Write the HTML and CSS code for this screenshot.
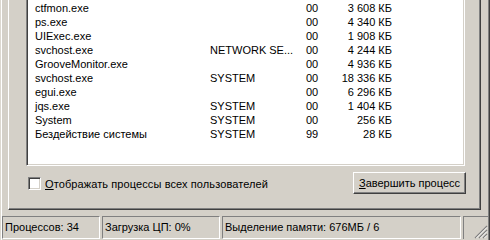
FILE: index.html
```html
<!DOCTYPE html>
<html lang="ru">
<head>
<meta charset="utf-8">
<title>Диспетчер задач</title>
<link rel="stylesheet" href="styles.css">
</head>
<body>
<div class="window">
  <div class="tabpane">
    <div class="list">
      <div class="row"><span class="c-name">ctfmon.exe</span><span class="c-user"></span><span class="c-cpu">00</span><span class="c-mem">3 608 КБ</span></div>
      <div class="row"><span class="c-name">ps.exe</span><span class="c-user"></span><span class="c-cpu">00</span><span class="c-mem">4 340 КБ</span></div>
      <div class="row"><span class="c-name">UIExec.exe</span><span class="c-user"></span><span class="c-cpu">00</span><span class="c-mem">1 908 КБ</span></div>
      <div class="row"><span class="c-name">svchost.exe</span><span class="c-user">NETWORK SE...</span><span class="c-cpu">00</span><span class="c-mem">4 244 КБ</span></div>
      <div class="row"><span class="c-name">GrooveMonitor.exe</span><span class="c-user"></span><span class="c-cpu">00</span><span class="c-mem">4 936 КБ</span></div>
      <div class="row"><span class="c-name">svchost.exe</span><span class="c-user">SYSTEM</span><span class="c-cpu">00</span><span class="c-mem">18 336 КБ</span></div>
      <div class="row"><span class="c-name">egui.exe</span><span class="c-user"></span><span class="c-cpu">00</span><span class="c-mem">6 296 КБ</span></div>
      <div class="row"><span class="c-name">jqs.exe</span><span class="c-user">SYSTEM</span><span class="c-cpu">00</span><span class="c-mem">1 404 КБ</span></div>
      <div class="row"><span class="c-name">System</span><span class="c-user">SYSTEM</span><span class="c-cpu">00</span><span class="c-mem">256 КБ</span></div>
      <div class="row"><span class="c-name">Бездействие системы</span><span class="c-user">SYSTEM</span><span class="c-cpu">99</span><span class="c-mem">28 КБ</span></div>
    </div>
    <div class="options">
      <label class="check"><span class="box"></span><span><u>О</u>тображать процессы всех пользователей</span></label>
      <button class="btn" type="button"><u>З</u>авершить процесс</button>
    </div>
  </div>
  <div class="status">
    <div class="panel p1">Процессов: 34</div>
    <div class="panel p2">Загрузка ЦП: 0%</div>
    <div class="panel p3">Выделение памяти: 676МБ / 6</div>
    <div class="panel p4">
      <svg class="grip" width="14" height="14" viewBox="0 0 14 14">
        <path d="M13 1L1 13M13 5L5 13M13 9L9 13" stroke="#808080" stroke-width="1.2" fill="none"/>
        <path d="M13 2.4L2.4 13M13 6.4L6.4 13M13 10.4L10.4 13" stroke="#ffffff" stroke-width="0.9" fill="none"/>
      </svg>
    </div>
  </div>
</div>
</body>
</html>
```
FILE: styles.css
```css
html, body {
  margin: 0;
  padding: 0;
}
body {
  width: 490px;
  height: 240px;
  overflow: hidden;
  background: #d4d0c8;
  font-family: "Liberation Sans", Arial, sans-serif;
  font-size: 11px;
  color: #000;
}
.window {
  box-sizing: border-box;
  width: 490px;
  height: 240px;
  display: flex;
  flex-direction: column;
  border-left: 1px solid #dcd8d0;
  border-right: 1px solid #404040;
  box-shadow: inset 1px 0 #ffffff, inset -1px 0 #808080;
  padding: 0 1px;
}
.tabpane {
  box-sizing: border-box;
  margin: 0 7px 0 6px;
  height: 210px;
  flex: none;
  border-left: 1px solid #ffffff;
  border-right: 1px solid #404040;
  border-bottom: 1px solid #404040;
  box-shadow: inset -1px -1px #808080;
  padding: 0 15px 0 17px;
  display: flex;
  flex-direction: column;
}
.list {
  box-sizing: border-box;
  height: 166px;
  flex: none;
  background: #fff;
  border-left: 1px solid #808080;
  border-right: 1px solid #ffffff;
  border-bottom: 1px solid #ffffff;
  box-shadow: inset 1px 0 #404040, inset -1px -1px #d4d0c8;
  padding: 1px 0 0 1px;
}
.row {
  display: flex;
  height: 14px;
  line-height: 14px;
  white-space: nowrap;
}
.row span {
  display: block;
  box-sizing: border-box;
  overflow: hidden;
}
.c-name { width: 176px; padding-left: 7px; }
.c-user { width: 96px; padding-left: 6px; }
.c-cpu { width: 35px; padding-left: 6px; }
.c-mem { width: 62px; padding-right: 5px; text-align: right; }
.options {
  margin-top: 6px;
  height: 22px;
  display: flex;
  align-items: center;
  justify-content: space-between;
}
.check {
  display: flex;
  align-items: center;
  gap: 4px;
  margin-left: 2px;
  margin-top: 1px;
  letter-spacing: 0.1px;
}
.box {
  box-sizing: border-box;
  width: 13px;
  height: 13px;
  background: #fff;
  border-top: 1px solid #808080;
  border-left: 1px solid #808080;
  border-right: 1px solid #ffffff;
  border-bottom: 1px solid #ffffff;
  box-shadow: inset 1px 1px #404040, inset -1px -1px #d4d0c8;
}
.btn {
  box-sizing: border-box;
  width: 113px;
  height: 22px;
  margin: 0 -1px 0 0;
  padding: 0;
  font: inherit;
  color: #000;
  background: #d4d0c8;
  border-top: 1px solid #ffffff;
  border-left: 1px solid #ffffff;
  border-right: 1px solid #404040;
  border-bottom: 1px solid #404040;
  box-shadow: inset -1px -1px #808080;
}
.status {
  margin-top: 6px;
  height: 23px;
  display: flex;
  gap: 2px;
}
.panel {
  box-sizing: border-box;
  height: 23px;
  line-height: 21px;
  padding-left: 2px;
  white-space: nowrap;
  overflow: hidden;
  border-top: 1px solid #808080;
  border-left: 1px solid #808080;
  border-right: 1px solid #ffffff;
  border-bottom: 1px solid #ffffff;
}
.p1 { width: 98px; }
.p2 { width: 118px; }
.p3 { width: 239px; }
.p4 {
  flex: 1;
  padding: 0;
  display: flex;
  justify-content: flex-end;
  align-items: flex-end;
  border-right: none;
  border-bottom: none;
}
.grip { display: block; }
```
